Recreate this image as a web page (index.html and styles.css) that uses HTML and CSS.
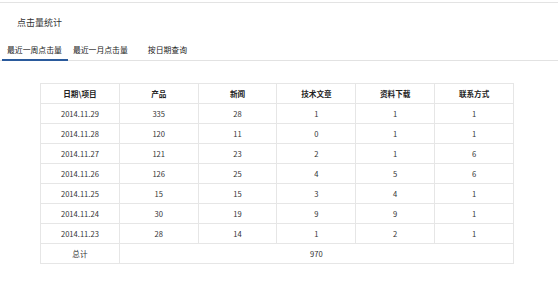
FILE: index.html
```html
<!DOCTYPE html>
<html lang="zh">
<head>
<meta charset="utf-8">
<link rel="stylesheet" href="styles.css">
</head>
<body>
<div class="page">
  <div class="topline"></div>
  <h1 class="title">点击量统计</h1>
  <div class="tabs">
    <span class="tab active">最近一周点击量</span>
    <span class="tab">最近一月点击量</span>
    <span class="tab tab-wide">按日期查询</span>
  </div>
  <div class="table-wrap">
    <table class="stats">
      <thead>
        <tr><th>日期\项目</th><th>产品</th><th>新闻</th><th>技术文章</th><th>资料下载</th><th>联系方式</th></tr>
      </thead>
      <tbody>
        <tr><td>2014.11.29</td><td>335</td><td>28</td><td>1</td><td>1</td><td>1</td></tr>
        <tr><td>2014.11.28</td><td>120</td><td>11</td><td>0</td><td>1</td><td>1</td></tr>
        <tr><td>2014.11.27</td><td>121</td><td>23</td><td>2</td><td>1</td><td>6</td></tr>
        <tr><td>2014.11.26</td><td>126</td><td>25</td><td>4</td><td>5</td><td>6</td></tr>
        <tr><td>2014.11.25</td><td>15</td><td>15</td><td>3</td><td>4</td><td>1</td></tr>
        <tr><td>2014.11.24</td><td>30</td><td>19</td><td>9</td><td>9</td><td>1</td></tr>
        <tr><td>2014.11.23</td><td>28</td><td>14</td><td>1</td><td>2</td><td>1</td></tr>
        <tr><td>总计</td><td colspan="5">970</td></tr>
      </tbody>
    </table>
  </div>
</div>
</body>
</html>
```

FILE: styles.css
```css
html, body {
  margin: 0;
  padding: 0;
  background: #ffffff;
}
body {
  font-family: "Noto Sans CJK SC", "Noto Sans", sans-serif;
  color: #333333;
}
.page {
  width: 558px;
  padding-top: 2px;
}
.topline {
  height: 1px;
  background: #e3e3e3;
}
.title {
  margin: 0;
  padding: 13px 0 0 17px;
  font-size: 9px;
  font-weight: normal;
  line-height: 14px;
  color: #333;
}
.tabs {
  margin-top: 13px;
  display: flex;
  border-bottom: 1px solid #e2e2e2;
  padding-left: 2px;
}
.tab {
  font-size: 7.85px;
  line-height: 13px;
  padding: 0 6px 4px 5px;
  color: #222;
}
.tab.active {
  border-bottom: 2px solid #2a5a9c;
  margin-bottom: -1px;
  padding-bottom: 3px;
}
.tab-wide {
  padding-left: 14px;
}
.table-wrap {
  padding: 22px 0 0 40px;
}
.stats {
  border-collapse: collapse;
  width: 474px;
  table-layout: fixed;
  font-size: 7.6px;
  color: #333;
}
.stats th, .stats td {
  border: 1px solid #e6e6e6;
  height: 19px;
  padding: 0;
  text-align: center;
  font-weight: normal;
}
.stats th {
  font-weight: bold;
  color: #222;
}
```
